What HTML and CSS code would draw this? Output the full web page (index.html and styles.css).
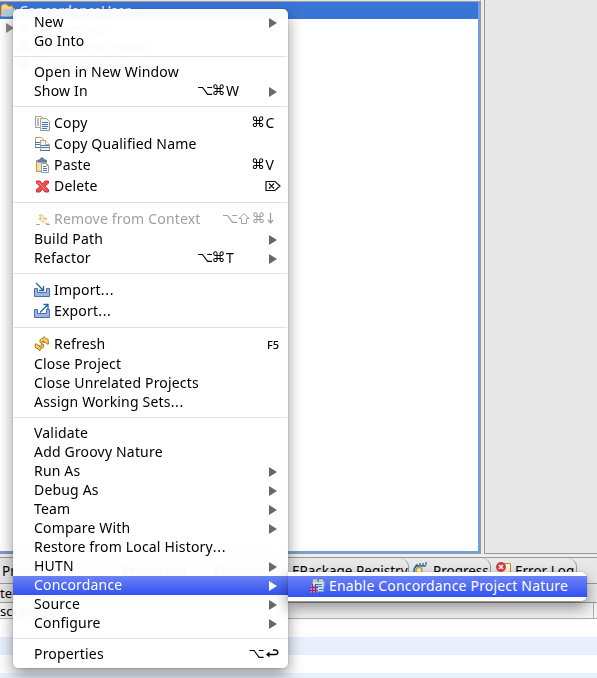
FILE: index.html
```html
<!DOCTYPE html>
<html lang="en">
<head>
<meta charset="utf-8">
<title>Project Explorer</title>
<link rel="stylesheet" href="styles.css">
</head>
<body>
<div class="workbench">
  <div class="upper">
    <section class="explorer">
      <div class="tree-row selected"><svg class="folder" width="15" height="15" viewBox="0 0 15 15"><path d="M1 13V3l2-2h4l1 2h5v4" fill="#f6d890" stroke="#b77b32"/><path d="M1 13 4 6h11l-3 7z" fill="#a9cdf5" stroke="#f5c96c"/></svg><span>ConcordanceUser</span></div>
      <div class="tree-row child"><i class="twisty"></i><i class="ghost tan"></i><span>metamodel</span></div>
      <div class="tree-row child"><i class="twisty none"></i><i class="ghost"></i><span>GraphOne.model</span></div>
      <div class="tree-row child"><i class="twisty none"></i><i class="ghost"></i><span>GraphTwo.model</span></div>
    </section>
    <section class="editor"></section>
  </div>
  <div class="tabs">
    <div class="tab problems">Problems</div>
    <div class="tab properties">Properties</div>
    <div class="tab console">Console</div>
    <div class="tab registry">EPackage Registry</div>
    <div class="tab progress"><svg width="15" height="15" viewBox="0 0 15 15"><path d="M2 4h11M4 2v2M7 1v3M10 1v3M13 0v3" stroke="#286aa5" fill="none" stroke-width="1.3"/><path d="M5 3Q-1 6 2 13" stroke="#286aa5" fill="none" stroke-width="1.5"/><circle cx="6" cy="8.500" r="3" fill="#fff1b4" stroke="#d4a329" stroke-width="1.5"/></svg><span>Progress</span></div>
    <div class="tab errors"><svg width="15" height="15" viewBox="0 0 15 15"><path d="M7 1.500h7.500V14H4V8" fill="#fff5d8" stroke="#b58b32"/><circle cx="5" cy="5" r="5" fill="#d83a40"/><path d="m3 3 4 4m0-4L3 7" stroke="#fff" stroke-width="1.6"/></svg><span>Error Log</span></div>
  </div>
  <div class="filters">ters matched</div>
  <div class="table-head"><span>scription</span></div>
  <div class="table-row"></div><div class="table-row alt"></div><div class="table-row"></div><div class="table-row alt"></div>
</div>

<nav class="menu">
  <div class="item"><span class="label">New</span><i class="arrow"></i></div>
  <div class="item"><span class="label">Go Into</span></div>
  <div class="sep"></div>
  <div class="item"><span class="label">Open in New Window</span></div>
  <div class="item"><span class="label">Show In</span><span class="keys before-arrow"><i>⌥</i><i>⌘</i>W</span><i class="arrow"></i></div>
  <div class="sep"></div>
  <div class="item icon"><svg width="16" height="16" viewBox="0 0 16 16"><path d="M1.500 1.500h6l2 2v9h-8z" fill="#fff" stroke="#8f9fb3"/><path d="M1.500 1.500h6" stroke="#c9aa54"/><path d="M3 4h2M3 6h2M3 8h2M3 10h2" stroke="#5680b6"/><path d="M6.500 3.500h6l3 3v9h-9z" fill="#eaf1ff" stroke="#8796ac"/><path d="M6.500 15V3.500h6l3 3" fill="none" stroke="#c9aa54"/><path d="M8 7.500h6M8 9.500h6M8 11.500h6M8 13.500h5" stroke="#4778bb"/></svg><span class="label">Copy</span><span class="keys letter"><i>⌘</i>C</span></div>
  <div class="item icon"><svg width="16" height="16" viewBox="0 0 16 16"><path d="M1.500 1.500h6l2 2v8h-8z" fill="#fff" stroke="#b3a064"/><path d="M1 6.500h7M1 8.500h7M1 11.500h7" stroke="#4778bb"/><path d="M6.500 4.500h5l4 4v6h-9z" fill="#edf4ff" stroke="#b5a15e"/><path d="M11.500 4.500v4h4" fill="#fff" stroke="#c9aa54"/><path d="M7 9.500h8M7 11.500h8M6 14.500h10" stroke="#477eb1"/></svg><span class="label">Copy Qualified Name</span></div>
  <div class="item icon"><svg width="16" height="16" viewBox="0 0 16 16"><path d="M2.500 3.500h10v11h-10z" fill="#f8dfaa" stroke="#c59340"/><path d="M4 4V3h2l1-2h2l1 2h2v2H4z" fill="#668bb8" stroke="#526f91"/><path d="M7.500 6.500h5l2 2v7h-7z" fill="#fff" stroke="#8fa2bd"/><path d="M12.500 6.500v2h2" stroke="#c9aa54" fill="none"/><path d="M9 9.500h3M9 11.500h4M9 13.500h4" stroke="#4778bb"/></svg><span class="label">Paste</span><span class="keys letter"><i>⌘</i>V</span></div>
  <div class="item icon"><svg width="16" height="16" viewBox="0 0 16 16"><path d="M2.500 3h3.500l2.500 3L11 3h3.500v2L11 8.500l3.500 3V14H11l-2.500-3L6 14H2.500v-2.500L6 8.500 2.500 5z" fill="#ed4b50" stroke="#cc343d"/><path d="m4 4 8 8" stroke="#ff8c8c"/></svg><span class="label">Delete</span><span class="keys edge"><svg width="16" height="12" viewBox="0 0 16 12"><path d="M1 1.500h9l5 4.500-5 4.500H1zM4 3.500l5 5m0-5-5 5" fill="none" stroke="#111" stroke-width="1.200"/></svg></span></div>
  <div class="sep"></div>
  <div class="item icon disabled"><svg width="16" height="16" viewBox="0 0 16 16"><path d="M2 13.500h4M12 13.500h4" stroke="#aaa"/><path d="M5 4.500q5-2 5 3h3l-4 4-4-4h2q0-2-2-3z" fill="#fff0c8" stroke="#ddb978"/><path d="M11 12.500 15 12" stroke="#ddb978"/></svg><span class="label">Remove from Context</span><span class="keys far"><i>⌥</i><svg width="15" height="13" viewBox="0 0 15 13"><path d="M7 1.500 12 6.500H9.500v5h-5v-5H2z" fill="none" stroke="#a0a0a0"/></svg><i>⌘</i><svg width="9" height="13" viewBox="0 0 9 13"><path d="M4.500 1v10M2 8l2.500 3L7 8" fill="none" stroke="#a0a0a0" stroke-width="1.300"/></svg></span></div>
  <div class="item"><span class="label">Build Path</span><i class="arrow"></i></div>
  <div class="item"><span class="label">Refactor</span><span class="keys before-arrow"><i>⌥</i><i>⌘</i>T</span><i class="arrow"></i></div>
  <div class="sep"></div>
  <div class="item icon"><svg width="16" height="16" viewBox="0 0 16 16"><path d="M.5 6.500h3v4h9v-4h3v8H.5z" fill="#9db5e0" stroke="#4a70b0"/><path d="m2 1 7 7M9.500 4v4.500H5" fill="none" stroke="#22659b" stroke-width="1.300"/></svg><span class="label">Import<span class="dots">...</span></span></div>
  <div class="item icon"><svg width="16" height="16" viewBox="0 0 16 16"><path d="M.5 6.500h3v4h9v-4h3v8H.5z" fill="#9db5e0" stroke="#4a70b0"/><path d="M6 9.500 13.500 2M9.500 1.500h4.500V6" fill="none" stroke="#22659b" stroke-width="1.300"/></svg><span class="label">Export<span class="dots">...</span></span></div>
  <div class="sep"></div>
  <div class="item icon"><svg width="16" height="16" viewBox="0 0 16 16"><path d="M6 6.500V4q1-2 4-2V.5l2.500 2.500H14l.5 5H13l-1-1.500H9.500L10 5H8.500L8 7.500zM9.500 8.500V11q-1 2-3.500 2v2l-3-3H1.500L1 8h2l1 1.500h2L5.500 11H7l.5-3z" fill="#f9cf69" stroke="#b67b18"/></svg><span class="label">Refresh</span><span class="keys fkey">F5</span></div>
  <div class="item"><span class="label">Close Project</span></div>
  <div class="item"><span class="label">Close Unrelated Projects</span></div>
  <div class="item"><span class="label">Assign Working Sets<span class="dots">...</span></span></div>
  <div class="sep"></div>
  <div class="item"><span class="label">Validate</span></div>
  <div class="item"><span class="label">Add Groovy Nature</span></div>
  <div class="item"><span class="label">Run As</span><i class="arrow"></i></div>
  <div class="item"><span class="label">Debug As</span><i class="arrow"></i></div>
  <div class="item"><span class="label">Team</span><i class="arrow"></i></div>
  <div class="item"><span class="label">Compare With</span><i class="arrow"></i></div>
  <div class="item"><span class="label">Restore from Local History<span class="dots">...</span></span></div>
  <div class="item"><span class="label">HUTN</span><i class="arrow"></i></div>
  <div class="item active"><span class="label">Concordance</span><i class="arrow"></i></div>
  <div class="item"><span class="label">Source</span><i class="arrow"></i></div>
  <div class="item"><span class="label">Configure</span><i class="arrow"></i></div>
  <div class="sep"></div>
  <div class="item"><span class="label">Properties</span><span class="keys ret"><i>⌥</i><svg width="14" height="12" viewBox="0 0 14 12"><path d="M8 2h2.500a2 2 0 0 1 0 4.500H3" fill="none" stroke="#000" stroke-width="1.400"/><path d="M1 6.500 4.500 3.500v6z"/></svg></span></div>
</nav>

<nav class="menu submenu">
  <div class="item icon active"><svg width="16" height="16" viewBox="0 0 16 16"><path d="M3.500 3.500h12l-1 10h-11z" fill="#c9e4f8" stroke="#6f9fd0"/><path d="M4 2.500h4M10 2.500h4" stroke="#efe27d" stroke-width="2"/><path d="M6 6.500h7M6 8.500h7M10 11.500h4" stroke="#437f9c"/><path d="M1.500 7.500h7v7h-7z" fill="#b886b8"/><path d="M0 9.500h9M0 12.500h9M3.500 6v10M6.500 6v10" stroke="#8d2c78"/></svg><span class="label">Enable Concordance Project Nature</span></div>
</nav>
</body>
</html>
```
FILE: styles.css
```css
* { box-sizing: border-box; }
body {
  margin: 0;
  width: 597px;
  height: 678px;
  overflow: hidden;
  position: relative;
  background: #ededed;
  color: #000;
  font: 14px/19px "Noto Sans", "Open Sans", sans-serif;
  white-space: nowrap;
}
svg { display: block; flex: none; }
i { font-style: normal; }

.workbench { width: 597px; height: 678px; display: flex; flex-direction: column; overflow: hidden; }
.upper { height: 554px; flex: none; display: flex; gap: 3px; }
.explorer {
  width: 481px;
  padding-top: 1px;
  background: #fff;
  border-top: 1px solid #e6e6e6;
  border-right: 1px solid #999;
  border-bottom: 1px solid #999;
  box-shadow: inset -2px 0 #709fe6, inset 0 -2px #709fe6, inset 0 1px #a0a0a0;
}
.editor { flex: 1; background: #e8e8e8; border-left: 1px solid #999; border-bottom: 1px solid #999; }
.tree-row { display: flex; align-items: center; height: 18px; width: 478px; }
.tree-row.selected { height: 17px; background: #3875d7; color: #fff; gap: 4px; }
.tree-row.selected span { line-height: 15px; letter-spacing: -.4px; }
.folder { margin-top: -1px; }
.tree-row.child { padding-left: 6px; }
.tree-row.child span { color: #555; }
.twisty { border-left: 8px solid #888; border-top: 5px solid transparent; border-bottom: 5px solid transparent; }
.twisty.none { border-left-color: transparent; }
.ghost { width: 11px; height: 10px; margin: 0 6px 0 5px; background: #a29ac8; }
.ghost.tan { background: #e6ca8c; }

.tabs { height: 27px; flex: none; display: flex; margin-top: 3px; border-top: 1px solid #999; border-bottom: 1px solid #999; background: #e8e8e8; }
.tab { display: flex; border-right: 1px solid #999; border-top-right-radius: 9px; line-height: 26px; font-size: 13.500px; }
.problems { width: 100px; padding-left: 2px; }
.properties { width: 92px; padding-left: 22px; }
.console { width: 92px; padding-left: 22px; }
.registry { width: 125px; padding-left: 8px; }
.progress { width: 82px; padding-left: 4px; gap: 5px; }
.errors { width: 86px; padding-left: 5px; gap: 4px; }
.tab svg { margin-top: 4px; }

.filters { height: 18px; flex: none; line-height: 19px; font-size: 13px; background: #e8e8e8; }
.table-head { height: 17px; flex: none; border-top: 1px solid #999; border-bottom: 1px solid #b0b0b0; background: #f5f5f5; font-size: 13px; line-height: 16px; }
.table-head span { display: block; width: 594px; border-right: 1px solid #b0b0b0; height: 15px; }
.table-row { height: 18px; flex: none; background: #fff; }
.table-row.alt { background: #e9f0fd; }

.menu {
  position: absolute;
  left: 13px;
  top: 9px;
  width: 275px;
  padding: 4px 0;
  border-radius: 5px;
  background: rgba(255, 255, 255, .96);
  backdrop-filter: blur(1px);
  box-shadow: 0 0 1px rgba(0, 0, 0, .65), 0 7px 15px rgba(0, 0, 0, .42);
}
.submenu { left: 288px; top: 572px; width: 299px; border-radius: 0 5px 5px 0; background: #fff; }
.item { height: 19px; display: flex; align-items: center; padding: 0 11px 0 21px; }
.item.icon { height: 21px; gap: 4px; }
.item.icon > svg { margin-top: -1px; }
.sep { height: 12px; padding: 5px 1px 0; }
.sep::before { content: ""; display: block; height: 1px; background: #e0e0e0; }
.label { letter-spacing: .18px; margin-top: -2px; }
.dots { letter-spacing: .7px; }
.arrow { margin-left: auto; border-left: 8px solid #686868; border-top: 5px solid transparent; border-bottom: 5px solid transparent; }
.active { color: #fff; background: linear-gradient(#6b82f5, #3353f1); }
.active .arrow { border-left-color: #fff; }
.disabled { color: #a0a0a0; }
.keys { margin-left: auto; margin-top: -2px; display: flex; align-items: center; }
.keys i { width: 14.500px; font: 14px/19px "DejaVu Sans", sans-serif; }
.before-arrow { width: 42px; }
.before-arrow + .arrow { margin-left: 30px; }
.letter { width: 24px; margin-right: 2px; }
.edge { margin-right: -4px; }
.far { margin-right: 2px; }
.fkey { margin-right: -2px; margin-top: 0; font-size: 11px; font-weight: 500; }
.ret { margin-right: -2px; gap: 2px; }
```
